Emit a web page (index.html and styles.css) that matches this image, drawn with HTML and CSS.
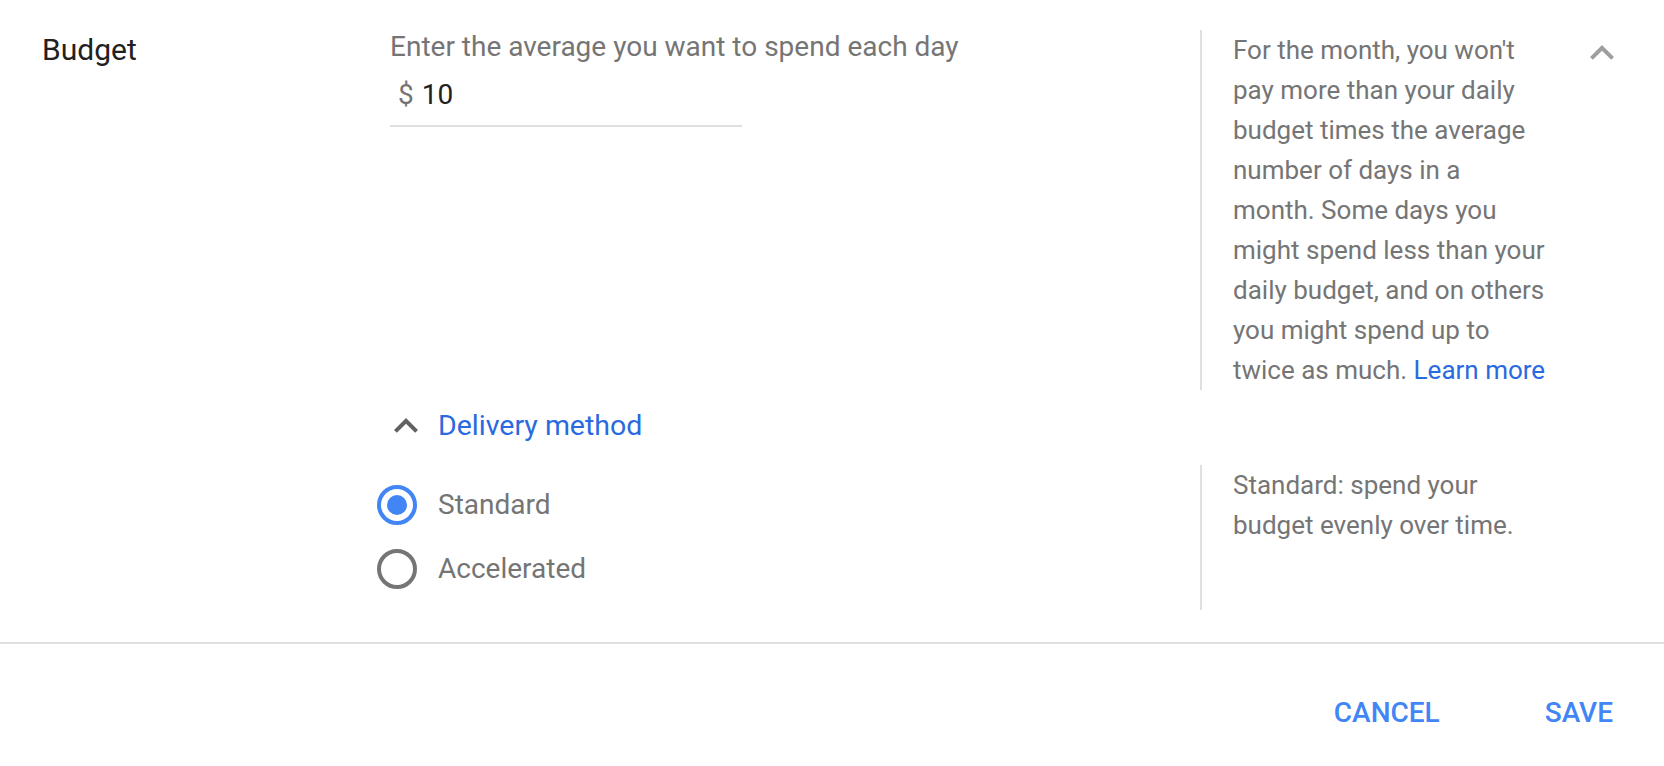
FILE: index.html
```html
<!DOCTYPE html>
<html lang="en">

<head>
    <meta charset="UTF-8">
    <meta name="viewport" content="width=device-width, initial-scale=1.0">
    <title>Budget</title>
    <link rel="stylesheet" href="styles.css">
</head>

<body>

    <form class="panel" id="budgetForm">
        <div class="row-label">Budget</div>

        <div class="field">
            <label class="field-label" for="dailyBudget">Enter the average you want to spend each day</label>
            <div class="money-input">
                <span class="currency">$</span>
                <input type="text" id="dailyBudget" name="dailyBudget" value="10">
            </div>
        </div>

        <div class="help">
            <p class="help-text">For the month, you won't pay more than your daily budget times the average number of days in a month. Some days you might spend less than your daily budget, and on others you might spend up to twice as much. <a href="#">Learn more</a></p>
            <button type="button" class="icon-btn collapse-btn" aria-label="Collapse">
                <svg viewBox="0 0 24 24" width="48" height="48"><path d="M12 8l-6 6 1.41 1.41L12 10.83l4.59 4.58L18 14z"/></svg>
            </button>
        </div>

        <div class="delivery-toggle">
            <span class="icon-btn toggle-icon">
                <svg viewBox="0 0 24 24" width="48" height="48"><path d="M12 8l-6 6 1.41 1.41L12 10.83l4.59 4.58L18 14z"/></svg>
            </span>
            <span class="toggle-text">Delivery method</span>
        </div>

        <div class="radio-group">
            <label class="radio">
                <input type="radio" name="delivery" value="standard" checked>
                <span class="radio-circle"></span>
                <span class="radio-label">Standard</span>
            </label>
            <label class="radio">
                <input type="radio" name="delivery" value="accelerated">
                <span class="radio-circle"></span>
                <span class="radio-label">Accelerated</span>
            </label>
        </div>

        <div class="help">
            <p class="help-text">Standard: spend your budget evenly over time.</p>
        </div>
    </form>

    <div class="actions">
        <button type="button" class="text-btn">CANCEL</button>
        <button type="button" class="text-btn">SAVE</button>
    </div>

</body>

</html>
```

FILE: styles.css
```css
body {
    font-family: Roboto, "Liberation Sans", Arial, sans-serif;
    margin: 0;
    background: #fff;
    color: #757575;
}

.panel {
    display: grid;
    grid-template-columns: 390px 810px 1fr;
    padding: 30px 0 32px;
}

.row-label {
    grid-column: 1;
    padding: 2px 0 0 42px;
    font-size: 30px;
    line-height: 36px;
    color: #212121;
}

.field {
    grid-column: 2;
}

.field-label {
    display: block;
    padding-top: 1px;
    font-size: 28px;
    line-height: 32px;
    color: #757575;
}

.money-input {
    display: flex;
    align-items: baseline;
    width: 352px;
    box-sizing: border-box;
    padding: 12px 0 10px 8px;
    border-bottom: 2px solid #e0e0e0;
    font-size: 28px;
    line-height: 40px;
}

.currency {
    color: #757575;
}

.money-input input {
    flex: 1;
    min-width: 0;
    margin-left: 8px;
    padding: 0;
    border: none;
    outline: none;
    font-family: inherit;
    font-size: 28px;
    line-height: 40px;
    color: #212121;
    background: transparent;
}

.help {
    grid-column: 3;
    display: flex;
    align-items: flex-start;
    border-left: 2px solid #e0e0e0;
    padding-left: 31px;
}

.help-text {
    width: 313px;
    margin: 0;
    font-size: 26px;
    line-height: 40px;
    color: #757575;
}

.help-text a {
    color: #2a6ae0;
    text-decoration: none;
}

.icon-btn {
    display: flex;
    width: 48px;
    height: 48px;
    padding: 0;
    border: none;
    background: none;
}

.collapse-btn {
    margin: -1px 0 0 32px;
    fill: #9e9e9e;
    cursor: pointer;
}

.delivery-toggle {
    grid-column: 2;
    display: flex;
    align-items: center;
    gap: 8px;
    margin: 12px 0 15px -8px;
    cursor: pointer;
}

.toggle-icon {
    fill: #616161;
}

.toggle-text {
    font-size: 28.5px;
    line-height: 40px;
    color: #2a6ae0;
}

.radio-group {
    grid-column: 2;
    padding: 8px 0 9px;
}

.radio {
    display: flex;
    align-items: center;
    height: 64px;
    margin-left: -13px;
    cursor: pointer;
}

.radio input {
    display: none;
}

.radio-circle {
    position: relative;
    width: 40px;
    height: 40px;
    box-sizing: border-box;
    border: 4px solid #757575;
    border-radius: 50%;
}

.radio input:checked + .radio-circle {
    border-color: #4285f4;
}

.radio input:checked + .radio-circle::after {
    content: "";
    position: absolute;
    left: 6px;
    top: 6px;
    width: 20px;
    height: 20px;
    border-radius: 50%;
    background: #4285f4;
}

.radio-label {
    margin-left: 21px;
    font-size: 28px;
    line-height: 40px;
    color: #757575;
}

.actions {
    display: flex;
    justify-content: flex-end;
    gap: 41px;
    border-top: 2px solid #e0e0e0;
    padding: 44px 19px 0 0;
}

.text-btn {
    height: 48px;
    padding: 0 32px;
    border: none;
    background: none;
    font-family: inherit;
    font-size: 28px;
    font-weight: 500;
    color: #4285f4;
    cursor: pointer;
}
```
